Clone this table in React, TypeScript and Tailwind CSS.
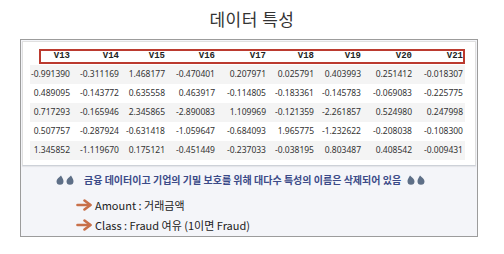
import React from "react";

const cols = ["V13", "V14", "V15", "V16", "V17", "V18", "V19", "V20", "V21"];
const rows = [
  ["-0.991390", "-0.311169", "1.468177", "-0.470401", "0.207971", "0.025791", "0.403993", "0.251412", "-0.018307"],
  ["0.489095", "-0.143772", "0.635558", "0.463917", "-0.114805", "-0.183361", "-0.145783", "-0.069083", "-0.225775"],
  ["0.717293", "-0.165946", "2.345865", "-2.890083", "1.109969", "-0.121359", "-2.261857", "0.524980", "0.247998"],
  ["0.507757", "-0.287924", "-0.631418", "-1.059647", "-0.684093", "1.965775", "-1.232622", "-0.208038", "-0.108300"],
  ["1.345852", "-1.119670", "0.175121", "-0.451449", "-0.237033", "-0.038195", "0.803487", "0.408542", "-0.009431"],
];

const gridCls = "grid grid-cols-[40px_49px_46px_50px_51px_48px_47px_51px_51px] w-[435px] pr-[2px]";

function Drop({ flip }: { flip?: boolean }) {
  return (
    <svg width="8" height="10" viewBox="0 0 8 10" className="shrink-0">
      <path
        d={flip ? "M3 0.5 C 1.5 3, 0.5 4.5, 0.5 6.3 A 3.5 3.5 0 0 0 7.5 6.3 C 7.5 4, 5 2.5, 3 0.5 Z" : "M5 0.5 C 3 2.5, 0.5 4, 0.5 6.3 A 3.5 3.5 0 0 0 7.5 6.3 C 7.5 4.5, 6.5 3, 5 0.5 Z"}
        fill="#5e6f87"
      />
    </svg>
  );
}

function Arrow() {
  return (
    <svg width="17" height="12" viewBox="0 0 17 12" className="shrink-0">
      <path d="M1.5 6 H14" stroke="#c8704a" strokeWidth="2.6" strokeLinecap="round" fill="none" />
      <path d="M8.5 1.5 L14.5 6 L8.5 10.5" stroke="#c8704a" strokeWidth="2.6" strokeLinecap="round" strokeLinejoin="round" fill="none" />
    </svg>
  );
}

export default function App() {
  return (
    <div className="w-[504px] h-[254px] bg-white overflow-hidden font-['Noto_Sans_CJK_KR',sans-serif] text-[#333]">
      <div className="h-[39px] flex justify-center pt-[8px]">
        <span className="text-[17px] leading-[22px] text-[#333] tracking-[0.5px]">데이터 특성</span>
      </div>
      <div className="ml-[20px] w-[458px] h-[198px] border border-[#9c9c9c] bg-[#f4f5f9] flex flex-col">
        <div className="mx-[1px] mt-[1px] bg-white border border-[#e0e0e0] border-b-[#cdd1d8] pl-[7px] pt-[6px] pb-[5px] shadow-[0_1px_1px_rgba(0,0,0,0.06)]">
          <div className="relative">
            <div className={`${gridCls} h-[17px] items-center`}>
              {cols.map((c) => (
                <div key={c} className="text-right font-['Liberation_Mono',monospace] font-bold text-[9px] leading-none text-[#222]">
                  {c}
                </div>
              ))}
            </div>
            <div className="absolute left-[9px] top-[1px] w-[426px] h-[15px] border-2 border-[#bb3a2f]" />
          </div>
          {rows.map((r, i) => (
            <div key={i} className={`${gridCls} h-[19px] items-center ${i % 2 === 0 ? "bg-[#f4f4f4]" : "bg-white"}`}>
              {r.map((v, j) => (
                <div key={j} className="text-right font-['Noto_Sans',sans-serif] text-[8.5px] leading-none text-[#333]">
                  {v}
                </div>
              ))}
            </div>
          ))}
        </div>
        <div className="flex items-center gap-[2px] pl-[35px] pt-[6px] h-[21px]">
          <Drop />
          <Drop />
          <span className="ml-[8px] text-[10px] font-bold text-[#3b4a88] leading-[14px] whitespace-nowrap">
            금융 데이터이고 기업의 기밀 보호를 위해 대다수 특성의 이름은 삭제되어 있음
          </span>
          <div className="ml-[4px] flex gap-[2px]">
            <Drop flip />
            <Drop flip />
          </div>
        </div>
        <div className="flex items-center pl-[55px] mt-[10px] h-[16px]">
          <Arrow />
          <span className="ml-[2px] text-[11px] leading-[14px] text-[#222] whitespace-nowrap">Amount : 거래금액</span>
        </div>
        <div className="flex items-center pl-[55px] mt-[4px] h-[16px]">
          <Arrow />
          <span className="ml-[2px] text-[11px] leading-[14px] text-[#222] whitespace-nowrap">Class : Fraud 여유 (1이면 Fraud)</span>
        </div>
      </div>
    </div>
  );
}
